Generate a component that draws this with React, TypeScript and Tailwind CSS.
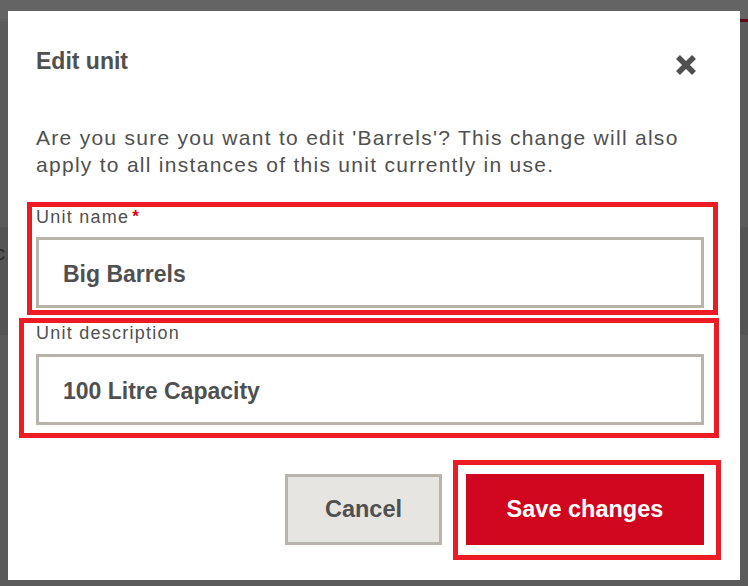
const textColor = "text-[#505050]";

function CloseIcon() {
  return (
    <svg width="22" height="22" viewBox="0 0 22 22" aria-hidden="true">
      <path d="M3 3 L19 19 M19 3 L3 19" stroke="#505050" strokeWidth="5.5" strokeLinecap="butt" />
    </svg>
  );
}

function Field({
  label,
  value,
  required,
  boxClass,
  labelClass,
}: {
  label: string;
  value: string;
  required?: boolean;
  boxClass: string;
  labelClass: string;
}) {
  return (
    <div className="relative">
      {/* annotation outline drawn over the field */}
      <div className={`pointer-events-none absolute border-[5px] border-[#ed1c24] ${boxClass}`} />
      <label className={`flex items-start text-[18px] leading-[22px] tracking-[1.25px] ${textColor} ${labelClass}`}>
        {label}
        {required ? <span className="ml-[3px] text-[17px] font-bold text-[#e0001b]">*</span> : null}
      </label>
      <input
        readOnly
        defaultValue={value}
        className={`block h-[71px] w-full border-[3px] border-[#b8b3ab] bg-white pl-[24px] pt-[3px] text-[23px] font-bold outline-none ${textColor}`}
      />
    </div>
  );
}

export default function App() {
  return (
    <div className="relative h-[586px] w-[748px] overflow-hidden bg-[#5b5b5b] font-['Liberation_Sans',Arial,sans-serif]">
      {/* dimmed page beneath the dialog */}
      <div className="flex h-full flex-col">
        <div className="flex h-[19px] bg-[#646464]" />
        <div className="flex h-[3px] justify-end bg-[#5f5f5f]">
          <div className="w-[8px] bg-[#5c0c14]" />
        </div>
        <div className="h-[205px]" />
        <div className="flex h-[108px] items-start bg-[#545454] pt-[14px]">
          <span className="ml-[-5px] text-[20px] leading-[24px] text-[#2c2c2c]">c</span>
        </div>
        <div className="flex-1" />
      </div>

      {/* dialog */}
      <div className="absolute left-[8px] top-[11px] flex h-[569px] w-[732px] flex-col bg-white pl-[28px] pr-[36px]">
        <div className="flex items-start justify-between pt-[37px]">
          <h2 className={`text-[23px] font-bold leading-[26px] ${textColor}`}>Edit unit</h2>
          <button type="button" aria-label="Close" className="mr-[7px] mt-[6px]">
            <CloseIcon />
          </button>
        </div>

        <p className={`mt-[48px] text-[21px] leading-[27px] tracking-[1.28px] ${textColor}`}>
          Are you sure you want to edit 'Barrels'? This change will also apply to all instances of this unit currently in use.
        </p>

        <div className="mt-[28px]">
          <Field
            label="Unit name"
            value="Big Barrels"
            required
            boxClass="left-[-9px] right-[-14px] top-[-4px] bottom-[-7px]"
            labelClass="mb-[9px]"
          />
        </div>

        <div className="mt-[14px]">
          <Field
            label="Unit description"
            value="100 Litre Capacity"
            boxClass="left-[-17px] right-[-15px] top-[-4px] bottom-[-13px]"
            labelClass="mb-[10px]"
          />
        </div>

        <div className="mt-[49px] flex justify-end gap-[24px]">
          <button
            type="button"
            className={`h-[71px] w-[157px] border-[3px] border-[#b8b3ab] bg-[#e7e5e1] text-[23.5px] font-bold ${textColor}`}
          >
            Cancel
          </button>
          <div className="relative">
            <div className="pointer-events-none absolute -bottom-[15px] -left-[13px] -right-[17px] -top-[14px] border-[5px] border-[#ed1c24]" />
            <button
              type="button"
              className="h-[71px] w-[238px] bg-[#d0061f] text-[23.5px] font-bold text-white"
            >
              Save changes
            </button>
          </div>
        </div>
      </div>
    </div>
  );
}
